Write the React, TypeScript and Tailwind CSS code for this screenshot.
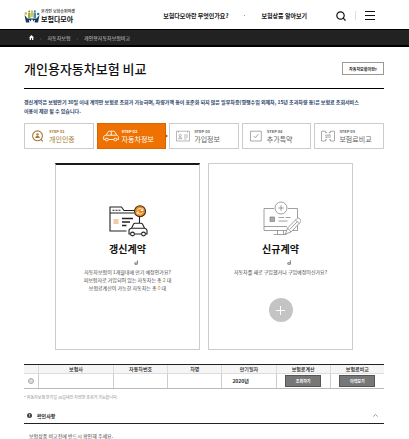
import { clsx } from "clsx";
import type { ReactNode } from "react";

interface Step {
	no: string;
	label: string;
	icon: ReactNode;
	tone: "done" | "active" | "idle";
}

interface ContractCardProps {
	title: string;
	icon: ReactNode;
	selected?: boolean;
	children: ReactNode;
}

function LogoMark() {
	return (
		<svg className="h-4 w-4" viewBox="0 0 16 16" fill="none">
			<path d="M.5 7 3.500 10.500h9L15.500 7 14 14.500h-3.500L8 11l-2.500 3.500H2z" fill="#173a5e" />
			<path d="M5.500 14.500V12M10.500 14.500V12" stroke="#fff" strokeWidth=".8" />
			<circle cx="1.800" cy="5.500" r="1.200" fill="#e8a33a" />
			<circle cx="14.200" cy="6" r="1.200" fill="#2a6fa5" />
			<path d="M4 5h2.500v5H4z" fill="#8cb43c" />
			<path d="M7 2.500h2V9H7z" fill="#e2c03e" />
			<path d="M9.500 4.500H12V10H9.500z" fill="#3c93a8" />
			<circle cx="5.200" cy="3.600" r="1" fill="#5d9c48" />
			<circle cx="10.800" cy="3.200" r="1" fill="#2a7ba5" />
		</svg>
	);
}

function PersonIcon() {
	return (
		<svg className="h-3 w-4" viewBox="0 0 16 12" fill="none" stroke="#a87a35">
			<circle cx="7.500" cy="5.800" r="4.900" strokeWidth="1.100" />
			<path d="M11 9.500l1.800 1.800" strokeWidth="1.100" />
			<circle cx="7.500" cy="4.400" r="1.200" fill="#a87a35" stroke="none" />
			<path d="M5.200 8c.2-3 4.400-3 4.600 0z" fill="#a87a35" stroke="none" />
		</svg>
	);
}

function CarIcon() {
	return (
		<svg className="h-3 w-4" viewBox="0 0 16 12" fill="none" stroke="#fff" strokeWidth=".9">
			<path d="M2.300 9.500H.7V7c0-1.200.8-1.600 2.500-1.800L5 2c.3-.6.700-.8 1.400-.8h4c.8 0 1.200.3 1.600.9l1.700 3.100c1.200.3 1.700.8 1.700 2v2.300h-1.300M5.300 9.500h5.600M3.300 5.200h10.200M8.300 1.300v3.900" />
			<circle cx="3.800" cy="9.500" r="1.400" />
			<circle cx="12.400" cy="9.500" r="1.400" />
		</svg>
	);
}

function FormIcon() {
	return (
		<svg className="h-3 w-4" viewBox="0 0 16 12" fill="none" stroke="#999" strokeWidth=".7">
			<path d="M1.500 1.200h13v9.800h-13zM3.500 1.200v1.300M12.500 1.200v1.300M3.500 8.800c.2-2 3.300-2 3.500 0zM9 5h4M9 7h4M9 9h2.500" />
			<circle cx="5.200" cy="5.500" r="1.100" />
		</svg>
	);
}

function CheckBoxIcon() {
	return (
		<svg className="h-3 w-4" viewBox="0 0 16 12" fill="none" stroke="#888" strokeWidth=".7">
			<path d="M2.500 1.200h10.800v9.800H2.500z" />
			<path d="M5.800 6l1.600 1.800 3-3.800" />
		</svg>
	);
}

function CompareIcon() {
	return (
		<svg className="h-3 w-4" viewBox="0 0 16 12" fill="none" stroke="#888" strokeWidth=".7">
			<path d="M7 2.500H5.500V1.200h-4v9.800h4V9.700H7M9 2.500h1.500V1.200h4v9.800h-4V9.700H9" />
			<path d="M5 5.200h5.500L9.300 4M11 7H5.500l1.200 1.200" />
		</svg>
	);
}

function FolderCarIcon() {
	return (
		<svg className="h-8 w-10" viewBox="0 0 40 32" fill="none" stroke="#222" strokeWidth="1.100">
			<path d="M18.500 26H2V2h11.500l2.500 3.500h10M2 8h24M31.500 11.500V18" />
			<path d="M4.500 5.300h8.500" strokeDasharray="2 1" />
			<path d="M5.500 14h5v5h-5z" fill="#f1c9a5" stroke="none" />
			<path d="M14 13.500h11M14 17h8M14 20.500h4.500" strokeWidth="1.300" />
			<path d="M22.500 29H21v-3.500c0-1.500 1-2 2.500-2.300l2-4c.3-.7.800-.9 1.500-.9h6c.8 0 1.200.3 1.600 1l2 3.900c1.500.3 2.400 1 2.400 2.300V29h-1.500M26.500 29h7M23.500 23.200h13" fill="#fff" />
			<circle cx="24.500" cy="29" r="1.900" fill="#fff" />
			<circle cx="35.500" cy="29" r="1.900" fill="#fff" />
			<circle cx="32" cy="6.300" r="5.500" fill="#e88c20" stroke="#3b2a18" />
			<path d="M29.300 5.300c1-2.200 4.300-2.200 5.200 0M34.800 3.300v2.200h-2M34.700 7.300c-1 2.200-4.300 2.200-5.200 0M29.200 9.300V7.100h2" stroke="#fff" strokeWidth=".9" />
		</svg>
	);
}

function MonitorIcon() {
	return (
		<svg className="h-9 w-10" viewBox="0 0 40 36" fill="none" stroke="#888" strokeWidth=".8">
			<path d="M13 7.500H3v22h33.500v-22h-9.500M3 25.500h23M16.500 29.500v4M22.500 29.500v4M12.500 33.500h13" />
			<path d="M9 16h4.500v4.500H9z" fill="#aaa" />
			<path d="M17.500 16.500h5.500M24.500 16.500h5M17.500 20h9" />
			<path d="M24.500 33l2-6 9.500-9.500c1.500-1.500 5 1.500 3.500 3.500L30 31zM26.500 27l3.500 4M34.500 19l3.800 3.700M29 28l7.500-7.500" fill="#fff" />
			<circle cx="20" cy="7" r="6" fill="#fff" />
			<path d="M20 4.200v5.600M17.200 7h5.600" />
		</svg>
	);
}

function HookMark() {
	return (
		<svg className="h-[5px] w-1" viewBox="0 0 4 5" fill="none" stroke="#666" strokeWidth=".8">
			<path d="M3.400.3v4H.8V2.800h2.600" />
		</svg>
	);
}

const steps: Step[] = [
	{ no: "STEP 01", label: "개인인증", icon: <PersonIcon />, tone: "done" },
	{ no: "STEP 02", label: "자동차정보", icon: <CarIcon />, tone: "active" },
	{ no: "STEP 03", label: "가입정보", icon: <FormIcon />, tone: "idle" },
	{ no: "STEP 04", label: "추가특약", icon: <CheckBoxIcon />, tone: "idle" },
	{ no: "STEP 05", label: "보험료비교", icon: <CompareIcon />, tone: "idle" },
];

const columns = ["보험사", "자동차번호", "차명", "만기일자", "보험료계산", "보험료비교"];

function StepItem({ no, label, icon, tone }: Step) {
	return (
		<li
			aria-current={tone === "active" ? "step" : undefined}
			className={clsx(
				"relative flex h-[26px] flex-1 items-center gap-[3px] border pl-[5px]",
				tone === "done" && "border-[#ccc] text-[#a87a35]",
				tone === "active" && "border-[#d96500] bg-[#ef7102] text-white",
				tone === "idle" && "border-[#ccc] text-[#666]",
			)}
		>
			{icon}
			<div>
				<p className="text-[4px] leading-[6px] font-bold">{no}</p>
				<p className="text-[7px] leading-[10px] whitespace-nowrap">{label}</p>
			</div>
			{tone === "active" && (
				<span className="absolute top-[10px] -right-[3px] h-1 w-[3px] bg-[#c65c00] [clip-path:polygon(0_0,100%_50%,0_100%)]" />
			)}
		</li>
	);
}

function ContractCard({ title, icon, selected, children }: ContractCardProps) {
	return (
		<section
			className={clsx(
				"flex h-[187px] flex-1 flex-col items-center border border-[#ccc]",
				selected && "border-t-2 border-t-[#1a1a1a]",
			)}
		>
			<div className={clsx("flex items-end pb-1", selected ? "h-[76px]" : "h-[77px]")}>{icon}</div>
			<h2 className="text-[10px] leading-4 font-bold text-[#111]">{title}</h2>
			<div className="flex h-[11px] items-center pl-4">
				<HookMark />
			</div>
			{children}
		</section>
	);
}

function RowButton({ children }: { children: ReactNode }) {
	return (
		<button
			type="button"
			className="mx-auto block h-3 w-9 border border-[#555] bg-[#777] text-[4px] leading-[10px] font-bold text-white"
		>
			{children}
		</button>
	);
}

export default function App() {
	return (
		<div className="bg-white font-['Noto_Sans_CJK_KR',sans-serif] text-[5px] leading-2 text-[#444]">
			<header className="flex h-[29px] items-center pt-[2px] pr-[34px] pl-6">
				<a href="#" className="flex items-center gap-px text-[#111]">
					<LogoMark />
					<span className="flex flex-col">
						<span className="text-[4px] leading-[6px] font-medium whitespace-nowrap">온라인 보험슈퍼마켓</span>
						<span className="text-[7px] leading-[10px] font-bold">보험다모아</span>
					</span>
				</a>
				<nav className="ml-auto flex items-center gap-[16px] text-[6px] font-bold text-[#111]">
					<a href="#">보험다모아란 무엇인가요?</a>
					<span className="size-px bg-[#999]" />
					<a href="#">보험상품 알아보기</a>
				</nav>
				<div className="ml-[29px] flex items-center gap-[9px]">
					<button type="button" aria-label="검색">
						<svg className="size-[10px]" viewBox="0 0 10 10" fill="none" stroke="#111" strokeWidth="1.200">
							<circle cx="4.500" cy="4.500" r="3.700" />
							<path d="M7.200 7.200l2.300 2.300" />
						</svg>
					</button>
					<span className="h-[9px] w-px bg-[#ddd]" />
					<button type="button" aria-label="메뉴">
						<svg className="size-[10px]" viewBox="0 0 10 10" stroke="#111" strokeWidth="1">
							<path d="M0 .5h10M0 4.500h10M0 8.500h10" />
						</svg>
					</button>
				</div>
			</header>

			<nav className="flex h-[18px] items-center gap-[6px] border-t border-b-2 border-black bg-[#222] pl-[29px] text-[#ccc]">
				<a href="#" aria-label="홈">
					<svg className="size-[5px]" viewBox="0 0 5 5" fill="#fff">
						<path d="M2.500 0 5 2.500h-.7V5H3V3.300H2V5H.7V2.500H0z" />
					</svg>
				</a>
				<span className="text-[#777]">›</span>
				<a href="#">자동차보험</a>
				<span className="text-[#777]">›</span>
				<span>개인용자동차보험비교</span>
			</nav>

			<main className="pr-[25px] pl-6">
				<div className="flex h-[42px] items-center justify-between border-b border-black pt-[2px]">
					<h1 className="text-[13px] leading-5 font-medium text-[#111]">개인용자동차보험 비교</h1>
					<button
						type="button"
						className="h-[13px] w-[42px] border border-[#999] text-[4px] font-bold text-[#222]"
					>
						자동차보험이란?
					</button>
				</div>

				<p className="mt-2 leading-[9px] font-bold text-[#2b3f6b]">
					갱신계약은 보험만기 30일 이내 계약만 보험료 조회가 가능하며, 차량가액 등이 표준화 되지 않은
					일부차종(병행수입 외제차, 15년 초과차량 등)은 보험료 조회서비스
					<br />
					이용이 제한 될 수 있습니다.
				</p>

				<ol className="mt-2 flex gap-[3px]">
					{steps.map((step) => (
						<StepItem key={step.no} {...step} />
					))}
				</ol>

				<div className="mx-[31px] mt-[14px] flex gap-2">
					<ContractCard title="갱신계약" icon={<FolderCarIcon />} selected>
						<p className="text-center whitespace-nowrap">
							자동차보험이 1개월내에 만기 예정인가요?
							<br />
							피보험자로 가입되어 있는 자동차는 총 <span className="text-[#a87a35]">2</span> 대
							<br />
							보험료계산이 가능한 자동차는 총 <span className="text-[#e8862a]">0</span> 대
						</p>
					</ContractCard>
					<ContractCard title="신규계약" icon={<MonitorIcon />}>
						<p className="text-center whitespace-nowrap">자동차를 새로 구입했거나 구입예정이신가요?</p>
						<button
							type="button"
							aria-label="신규계약 추가"
							className="mt-[22px] flex size-6 items-center justify-center rounded-full bg-[#c4c4c4]"
						>
							<svg className="size-[9px]" viewBox="0 0 9 9" stroke="#fff" strokeWidth="1">
								<path d="M4.500 0v9M0 4.500h9" />
							</svg>
						</button>
					</ContractCard>
				</div>

				<table className="mt-[14px] w-full table-fixed border-separate border-spacing-0 border-t border-b border-t-[#222] border-b-[#bbb] text-center text-[#222]">
					<colgroup>
						<col className="w-[14px]" />
						<col className="w-[75px]" />
						<col />
						<col />
						<col />
						<col />
						<col />
					</colgroup>
					<thead>
						<tr className="h-[9px] bg-[#f5f5f5]">
							<th className="border-b border-[#ddd] p-0" aria-label="선택" />
							{columns.map((name) => (
								<th key={name} className="border-b border-l border-[#ddd] p-0 text-[5px] leading-2 font-medium">
									{name}
								</th>
							))}
						</tr>
					</thead>
					<tbody>
						<tr className="h-[14px]">
							<td className="p-0">
								<input
									type="radio"
									name="contract"
									aria-label="계약 선택"
									className="mx-auto block size-[6px] appearance-none rounded-full border border-[#aaa] bg-[#ddd]"
								/>
							</td>
							<td className="border-l border-[#ccc] p-0" />
							<td className="border-l border-[#ccc] p-0" />
							<td className="border-l border-[#ccc] p-0" />
							<td className="border-l border-[#ccc] p-0 pl-[10px] text-left font-bold">2020년</td>
							<td className="border-l border-[#ccc] p-0">
								<RowButton>조회하기</RowButton>
							</td>
							<td className="border-l border-[#ccc] p-0">
								<RowButton>이력보기</RowButton>
							</td>
						</tr>
					</tbody>
				</table>
				<p className="mt-1 text-[4px] text-[#888]">* 자동차보험 만기일 30일내인 차량만 조회가 가능합니다.</p>

				<section className="mt-[7px]">
					<button
						type="button"
						aria-expanded="true"
						className="flex h-4 w-full items-center border-b border-[#222] pr-[6px] pl-[3px] font-bold text-[#222]"
					>
						<svg className="mr-[5px] size-[5px]" viewBox="0 0 5 5">
							<circle cx="2.500" cy="2.500" r="2.500" fill="#444" />
							<path d="M2.500 1v1.800M2.500 3.400v.6" stroke="#fff" strokeWidth=".7" />
						</svg>
						확인사항
						<svg className="ml-auto h-[3px] w-[5px]" viewBox="0 0 5 3" fill="none" stroke="#888" strokeWidth=".8">
							<path d="M.3 2.600 2.500.5l2.200 2.100" />
						</svg>
					</button>
					<p className="mt-2 pl-[5px]">보험상품 비교전에 반드시 확인해 주세요.</p>
				</section>
			</main>
		</div>
	);
}
